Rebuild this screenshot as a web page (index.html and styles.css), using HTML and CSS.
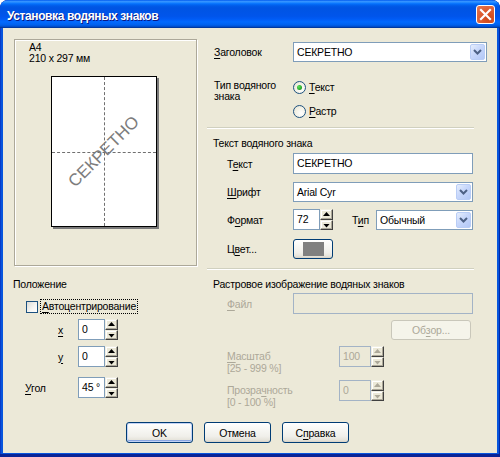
FILE: index.html
```html
<!DOCTYPE html>
<html lang="ru">
<head>
<meta charset="utf-8">
<title>Установка водяных знаков</title>
<link rel="stylesheet" href="styles.css">
</head>
<body>
<div class="window">
  <div class="titlebar">
    <span class="title">Установка водяных знаков</span>
    <div class="close"><svg width="19" height="19" viewBox="0 0 19 19"><path d="M5 5 L14 14 M14 5 L5 14" stroke="#fff" stroke-width="2.2" stroke-linecap="square"/></svg></div>
  </div>
  <div class="client">
    <div class="main">
      <div class="col-left">
        <div class="preview">
          <div class="paper-info">A4<br>210 x 297 мм</div>
          <div class="paper">
            <div class="dash-v"></div>
            <div class="dash-h"></div>
            <div class="wm">СЕКРЕТНО</div>
          </div>
        </div>
        <div class="heading">Положение</div>
        <div class="check-row">
          <span class="checkbox"></span>
          <span class="focus"><u>А</u>втоцентрирование</span>
        </div>
        <div class="pos-row r-x">
          <span class="pos-lbl pad-xy"><u>x</u></span>
          <div class="spin w40"><div class="edit">0</div><div class="spin-btns"><span class="sb up"></span><span class="sb down"></span></div></div>
        </div>
        <div class="pos-row r-y">
          <span class="pos-lbl pad-xy"><u>y</u></span>
          <div class="spin w40"><div class="edit">0</div><div class="spin-btns"><span class="sb up"></span><span class="sb down"></span></div></div>
        </div>
        <div class="pos-row r-angle">
          <span class="pos-lbl pad-angle"><u>У</u>гол</span>
          <div class="spin w40"><div class="edit">45 °</div><div class="spin-btns"><span class="sb up"></span><span class="sb down"></span></div></div>
        </div>
      </div>

      <div class="col-right">
        <div class="row r-title">
          <span class="lbl"><u>З</u>аголовок</span>
          <div class="combo w194"><span class="combo-text">СЕКРЕТНО</span><span class="drop"><svg width="9" height="6" viewBox="0 0 9 6"><path d="M1 1 L4.5 4.5 L8 1" fill="none" stroke="#4D6185" stroke-width="2"/></svg></span></div>
        </div>
        <div class="row r-type">
          <span class="lbl ml">Тип водяного<br>знака</span>
          <div class="radios">
            <div class="radio-item"><span class="radio checked"></span><span><u>Т</u>екст</span></div>
            <div class="radio-item"><span class="radio"></span><span><u>Р</u>астр</span></div>
          </div>
        </div>
        <div class="sep s1"></div>
        <div class="heading h2">Текст водяного знака</div>
        <div class="row r-text">
          <span class="lbl ind">Т<u>е</u>кст</span>
          <div class="edit w180">СЕКРЕТНО</div>
        </div>
        <div class="row r-font">
          <span class="lbl ind"><u>Ш</u>рифт</span>
          <div class="combo w180"><span class="combo-text">Arial Cyr</span><span class="drop"><svg width="9" height="6" viewBox="0 0 9 6"><path d="M1 1 L4.5 4.5 L8 1" fill="none" stroke="#4D6185" stroke-width="2"/></svg></span></div>
        </div>
        <div class="row r-size">
          <span class="lbl ind">Ф<u>о</u>рмат</span>
          <div class="spin w40"><div class="edit">72</div><div class="spin-btns"><span class="sb up"></span><span class="sb down"></span></div></div>
          <span class="lbl-type">Т<u>и</u>п</span>
          <div class="combo w97"><span class="combo-text">Обычный</span><span class="drop"><svg width="9" height="6" viewBox="0 0 9 6"><path d="M1 1 L4.5 4.5 L8 1" fill="none" stroke="#4D6185" stroke-width="2"/></svg></span></div>
        </div>
        <div class="row r-color">
          <span class="lbl ind">Ц<u>в</u>ет...</span>
          <div class="btn color-btn"><span class="swatch"></span></div>
        </div>
        <div class="sep s2"></div>
        <div class="heading h3">Растровое изображение водяных знаков</div>
        <div class="row r-file">
          <span class="lbl ind dis"><u>Ф</u>айл</span>
          <div class="edit w180 disabled"></div>
        </div>
        <div class="row r-browse">
          <div class="btn browse disabled">Об<u>з</u>ор...</div>
        </div>
        <div class="row r-scale">
          <span class="lbl ind wide dis ml2"><u>М</u>асштаб<br>[25 - 999 %]</span>
          <div class="spin w45 disabled"><div class="edit">100</div><div class="spin-btns"><span class="sb up"></span><span class="sb down"></span></div></div>
        </div>
        <div class="row r-opacity">
          <span class="lbl ind wide dis ml2">Прозра<u>ч</u>ность<br>[0 - 100 %]</span>
          <div class="spin w45 disabled"><div class="edit">0</div><div class="spin-btns"><span class="sb up"></span><span class="sb down"></span></div></div>
        </div>
      </div>
    </div>
    <div class="buttons">
      <div class="btn dlg default">OK</div>
      <div class="btn dlg">Отмена</div>
      <div class="btn dlg">С<u>п</u>равка</div>
    </div>
  </div>
</div>
</body>
</html>
```

FILE: styles.css
```css
* { box-sizing: border-box; margin: 0; padding: 0; }
body {
  margin: 0;
  font-family: "Liberation Sans", Arial, sans-serif;
  font-size: 10.5px;
  letter-spacing: -0.2px;
  color: #000;
  background: #fff;
}
u { text-decoration: underline; text-underline-offset: 1.5px; }

.window {
  width: 500px;
  height: 457px;
  display: flex;
  flex-direction: column;
  background: #0855DD;
  border-radius: 8px 8px 0 0;
  padding: 0 3px 4px;
  box-shadow: inset 0 -3px 0 #0A2496, inset 1px 0 0 #0A3CC8, inset -1px 0 0 #0029A8;
  overflow: hidden;
}
.titlebar {
  height: 28px;
  margin: 0 -3px;
  flex: none;
  display: flex;
  justify-content: space-between;
  align-items: flex-start;
  padding-left: 7px;
  border-radius: 8px 8px 0 0;
  background: linear-gradient(to bottom,
    #0058EE 0%, #3593FF 5%, #288EFF 8%, #127DFF 11%, #036FFC 14%,
    #0262EE 18%, #0057E5 24%, #0054E3 30%, #0055EB 58%, #005BF5 68%,
    #026AFE 78%, #0062EF 88%, #0052D6 94%, #0040AB 97%, #003092 100%);
}
.title {
  font-weight: bold;
  font-size: 12px;
  line-height: 14px;
  padding-top: 9px;
  color: #fff;
  text-shadow: 1px 1px 0 #0A1883;
  letter-spacing: -0.4px;
}
.close {
  width: 19px;
  height: 19px;
  margin: 5px 5px 0 0;
  border: 1px solid #fff;
  border-radius: 3px;
  background: radial-gradient(circle at 70% 75%, #CC4617 0%, #DC5A2E 45%, #E67751 100%);
  display: flex;
  align-items: center;
  justify-content: center;
}
.close svg { margin: -1px; }

.client {
  flex: 1;
  background: #ECE9D8;
  display: flex;
  flex-direction: column;
  padding: 11px 10px 10px 10px;
}
.main { display: flex; align-items: flex-start; }

/* Left column */
.col-left { width: 185px; display: flex; flex-direction: column; }
.preview {
  margin-left: 1px;
  width: 183px;
  height: 227px;
  border: 1px solid #ACA899;
  box-shadow: 1px 1px 0 #fff, inset 1px 1px 0 #fff;
  padding: 2px 0 0 14px;
}
.paper-info { line-height: 11px; }
.paper {
  position: relative;
  margin: 12px 0 0 22px;
  width: 106px;
  height: 151px;
  background: #fff;
  border: 1px solid #000;
  box-shadow: 2px 2px 0 #7A7A7A;
  overflow: hidden;
}
.dash-v {
  position: absolute;
  left: 52px; top: 0; bottom: 0;
  border-left: 1px dashed #707070;
}
.dash-h {
  position: absolute;
  top: 75px; left: 0; right: 0;
  border-top: 1px dashed #707070;
}
.wm {
  position: absolute;
  left: 50%;
  top: 50%;
  transform: translate(-50%, -50%) rotate(-45deg);
  font-family: "Liberation Sans", Arial, sans-serif;
  font-size: 17px;
  letter-spacing: 0;
  color: #7C7C7C;
  white-space: nowrap;
}

.heading { line-height: 13px; height: 13px; white-space: nowrap; }
.col-left .heading { margin-top: 12px; }

.check-row {
  margin-top: 9px;
  height: 13px;
  display: flex;
  align-items: center;
  padding-left: 13px;
}
.checkbox {
  width: 12px;
  height: 12px;
  border: 1px solid #1C5180;
  background: linear-gradient(135deg, #DCDCD7 0%, #F6F6F3 60%, #fff 100%);
}
.focus {
  margin-left: 2px;
  border: 1px dotted #000;
  line-height: 13px;
  padding: 0 1px;
}

.pos-row { display: flex; align-items: center; }
.pos-lbl { width: 65px; }
.pad-xy { padding-left: 45px; }
.pad-angle { padding-left: 12px; }
.r-x { margin-top: 6px; }
.r-y { margin-top: 6px; }
.r-angle { margin-top: 10px; }

/* Edits & spins */
.edit {
  height: 21px;
  border: 1px solid #7F9DB9;
  background: #fff;
  padding-left: 3px;
  line-height: 19px;
  white-space: nowrap;
  overflow: hidden;
}
.edit.disabled { background: #ECE9D8; border-color: #A3B3C6; }
.w180 { width: 180px; }
.spin { display: flex; height: 21px; }
.spin .edit { flex: 1; }
.w40 { width: 40px; }
.w45 { width: 45px; }
.spin-btns { width: 13px; display: flex; flex-direction: column; }
.sb {
  flex: 1;
  position: relative;
  background: #ECE9D8;
  border: 1px solid;
  border-color: #F1EFE2 #404040 #404040 #F1EFE2;
  box-shadow: inset -1px -1px 0 #ACA899, inset 1px 1px 0 #fff;
}
.sb::after {
  content: "";
  position: absolute;
  left: 2px;
  width: 7px;
  height: 4px;
  background: #000;
}
.sb.up::after { top: 2px; clip-path: polygon(50% 0, 100% 100%, 0 100%); }
.sb.down::after { top: 3px; clip-path: polygon(0 0, 100% 0, 50% 100%); }
.spin.disabled .edit { background: #ECE9D8; border-color: #A3B3C6; color: #ACA899; }
.spin.disabled .sb::after { background: #ACA899; }

/* Right column */
.col-right { margin-left: 9px; width: 280px; display: flex; flex-direction: column; }
.row { display: flex; align-items: center; }
.lbl { width: 86px; padding-left: 7px; white-space: nowrap; }
.lbl.ind { padding-left: 20px; }
.lbl.ml { line-height: 11px; align-self: flex-start; }
.lbl.wide { width: 132px; }
.lbl.ml2 { line-height: 12px; align-self: flex-start; padding-top: 4px; }
.dis { color: #ACA899; }

.r-title { margin-top: 3px; }
.r-type { margin-top: 18px; align-items: flex-start; }
.radios { display: flex; flex-direction: column; gap: 10px; }
.radio-item { display: flex; align-items: center; height: 14px; gap: 3px; }
.radio {
  width: 13px;
  height: 13px;
  border-radius: 50%;
  border: 1px solid #1C5180;
  background: radial-gradient(circle at 65% 65%, #fff 0%, #F1EFE2 60%, #DCD9C9 100%);
  position: relative;
}
.radio.checked::after {
  content: "";
  position: absolute;
  left: 3px; top: 3px;
  width: 5px; height: 5px;
  border-radius: 50%;
  background: radial-gradient(circle at 35% 35%, #5CE05C 0%, #21A121 70%);
}
.sep {
  width: 267px;
  height: 2px;
  border-top: 1px solid #D0D0BF;
  border-bottom: 1px solid #fff;
}
.s1 { margin-top: 9px; }
.h2 { margin-top: 8px; padding-left: 6px; }
.r-text { margin-top: 3px; }
.r-font { margin-top: 8px; }
.r-size { margin-top: 7px; }
.lbl-type { width: 24px; margin-left: 19px; white-space: nowrap; }
.r-color { margin-top: 9px; }
.s2 { margin-top: 9px; }
.h3 { margin-top: 8px; padding-left: 6px; }
.r-file { margin-top: 2px; }
.r-browse { margin-top: 6px; }
.r-scale { margin-top: 6px; align-items: flex-start; }
.r-opacity { margin-top: 6px; align-items: flex-start; }

/* Combo */
.combo {
  height: 20px;
  border: 1px solid #7F9DB9;
  background: #fff;
  display: flex;
  align-items: stretch;
  padding: 1px;
}
.combo-text { flex: 1; padding-left: 2px; line-height: 16px; white-space: nowrap; }
.w194 { width: 194px; }
.w97 { width: 97px; }
.drop {
  width: 15px;
  border: 1px solid #B9CDF6;
  border-radius: 2px;
  background: linear-gradient(135deg, #E6EEFC 0%, #C7D7FB 45%, #B3C8F6 100%);
  display: flex;
  align-items: center;
  justify-content: center;
}

/* Buttons */
.btn {
  border: 1px solid #003C74;
  border-radius: 3px;
  background: linear-gradient(to bottom, #FFFFFF 0%, #F8F8F5 30%, #F0EFEA 70%, #E5E3DA 90%, #D6D0C5 100%);
  display: flex;
  align-items: center;
  justify-content: center;
  white-space: nowrap;
}
.btn.disabled {
  border-color: #C9C7BA;
  background: #F5F4EA;
  color: #ACA899;
}
.color-btn { width: 40px; height: 20px; }
.swatch { width: 21px; height: 14px; background: #808080; }
.browse { width: 80px; height: 20px; margin-left: 184px; }

.buttons {
  margin-top: auto;
  display: flex;
  gap: 11px;
  padding-left: 113px;
}
.dlg { width: 67px; height: 21px; }
.btn.default { box-shadow: inset 0 0 0 1px #C3D3F5, inset 0 -1px 0 1px #8AA6E2; }
```
